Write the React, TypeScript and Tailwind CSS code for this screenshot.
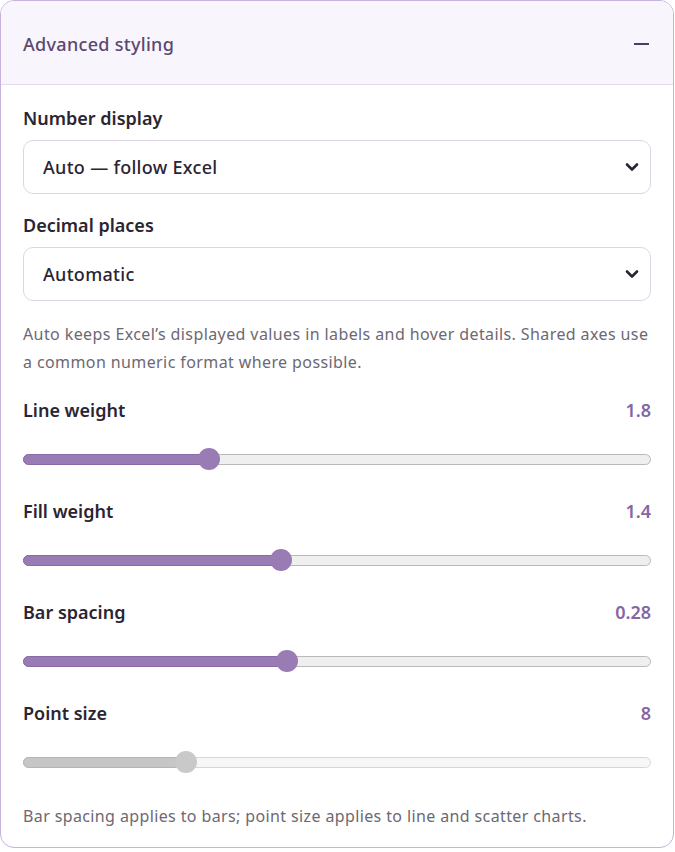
import { useState } from 'react'

type SliderSetting = {
  key: string
  label: string
  value: string
  pct: number
  disabled?: boolean
}

const sliders: SliderSetting[] = [
  { key: 'line', label: 'Line weight', value: '1.8', pct: 0.289 },
  { key: 'fill', label: 'Fill weight', value: '1.4', pct: 0.408 },
  { key: 'bar', label: 'Bar spacing', value: '0.28', pct: 0.417 },
  { key: 'point', label: 'Point size', value: '8', pct: 0.25, disabled: true },
]

function Chevron() {
  return (
    <svg width="14" height="9" viewBox="0 0 14 9" className="pointer-events-none absolute right-[12px] top-1/2 -translate-y-1/2">
      <path d="M2 2l5 5 5-5" fill="none" stroke="#2a2435" strokeWidth="2.6" strokeLinecap="round" strokeLinejoin="round" />
    </svg>
  )
}

function SelectField({ label, value, options }: { label: string; value: string; options: string[] }) {
  const [v, setV] = useState(value)
  return (
    <div>
      <div className="h-[28px] text-[18px] leading-[28px] font-semibold text-[#2b2433]">{label}</div>
      <div className="relative mt-2">
        <select
          value={v}
          onChange={(e) => setV(e.target.value)}
          className="h-[54px] w-full appearance-none rounded-[10px] border border-[#ddd5e6] bg-white pl-[19px] pr-10 text-[18px] font-medium tracking-[0.3px] text-[#2a2435] outline-none"
        >
          {options.map((o) => (
            <option key={o}>{o}</option>
          ))}
        </select>
        <Chevron />
      </div>
    </div>
  )
}

function Slider({ s }: { s: SliderSetting }) {
  const fill = s.disabled ? 'bg-[#c6c6c6] border-[#b4b4b4]' : 'bg-[#9a7cb4] border-[#8a6aa6]'
  const thumb = s.disabled ? 'bg-[#c9c9c9]' : 'bg-[#9a7cb4]'
  const rest = s.disabled ? 'bg-[#f7f7f7] border-[#d6d6d6]' : 'bg-[#efefef] border-[#b9b9b9]'
  return (
    <div className="relative mt-[24px] h-[22px]">
      <div className={`absolute inset-x-0 top-[6px] h-[11px] rounded-full border ${rest}`} />
      <div
        className={`absolute left-0 top-[6px] h-[11px] rounded-l-full border ${fill}`}
        style={{ width: `calc(${s.pct} * (100% - 22px) + 11px)` }}
      />
      <div
        className={`absolute top-0 h-[22px] w-[22px] rounded-full ${thumb}`}
        style={{ left: `calc(${s.pct} * (100% - 22px))` }}
      />
    </div>
  )
}

export default function App() {
  const [open, setOpen] = useState(true)
  return (
    <div className="min-h-screen bg-white" style={{ fontFamily: '"Noto Sans", "Open Sans", sans-serif' }}>
      <div className="w-[674px] overflow-hidden rounded-[14px] border border-[#c7b2dc] bg-white">
        <button
          onClick={() => setOpen(!open)}
          className="flex h-[84px] w-full items-center justify-between border-b border-[#e5dcef] bg-[#f8f5fc] pt-[3px] pl-[22px] pr-[24px]"
        >
          <span className="text-[18px] font-medium tracking-[0.3px] text-[#5a4870]">Advanced styling</span>
          <span className="block h-[2px] w-[15px] bg-[#4d3c63]" />
        </button>

        {open && (
          <div className="px-[22px] pt-[19px] pb-[17px]">
            <SelectField label="Number display" value="Auto — follow Excel" options={['Auto — follow Excel', 'Number', 'Percent', 'Currency']} />
            <div className="mt-[17px]">
              <SelectField label="Decimal places" value="Automatic" options={['Automatic', '0', '1', '2', '3']} />
            </div>
            <p className="mt-[19px] text-[16px] leading-[28px] tracking-[0.4px] text-[#6d6873]">
              Auto keeps Excel’s displayed values in labels and hover details. Shared axes use a common numeric format where possible.
            </p>

            <div className="mt-[20px]">
              {sliders.map((s, i) => (
                <div key={s.key} className={i > 0 ? 'mt-[27px]' : ''}>
                  <div className="flex h-[28px] items-center justify-between text-[18px] font-semibold">
                    <span className="text-[#2b2433]">{s.label}</span>
                    <span className="text-[#8466a3]">{s.value}</span>
                  </div>
                  <Slider s={s} />
                </div>
              ))}
            </div>

            <p className="mt-[29px] text-[16px] leading-[28px] tracking-[0.38px] text-[#6d6873]">
              Bar spacing applies to bars; point size applies to line and scatter charts.
            </p>
          </div>
        )}
      </div>
    </div>
  )
}
